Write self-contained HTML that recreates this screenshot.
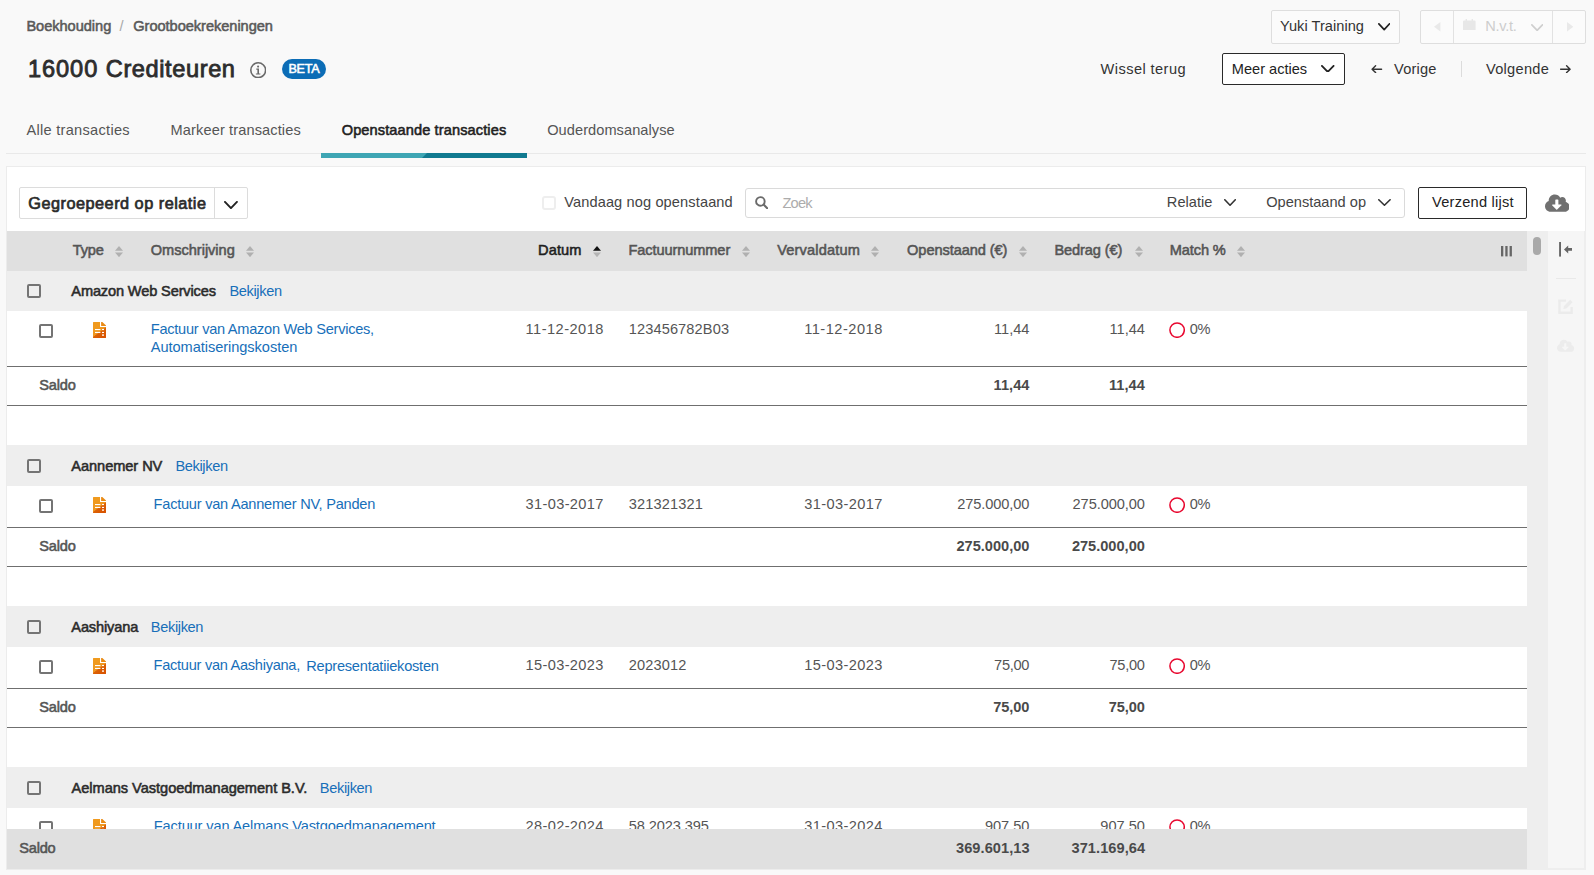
<!DOCTYPE html>
<html lang="nl">
<head>
<meta charset="utf-8">
<title>16000 Crediteuren</title>
<style>
html,body{margin:0;padding:0;}
body{width:1594px;height:875px;overflow:hidden;background:#f9f9f9;position:relative;
  font-family:"Liberation Sans",sans-serif;}
.b{position:absolute;box-sizing:content-box;display:block;}
.t{position:absolute;white-space:pre;line-height:20px;height:20px;}
</style>
</head>
<body>
<div class="b" style="left:6px;top:153px;width:1580px;height:1px;background:#e9e9e9;"></div>
<div class="b" style="left:6px;top:166px;width:1578px;height:702px;background:#fff;border:1px solid #ececec;"></div>
<svg class="b" style="left:321px;top:153px;" width="206" height="5" viewBox="0 0 206 5"><rect width="206" height="5" fill="#117a90"/><path d="M0 0 H106 L101 5 H0 Z" fill="#3fa6b4"/></svg>
<div class="b" style="left:7px;top:231px;width:1520px;height:40px;background:#e0e0e0;"></div>
<div class="b" style="left:1527px;top:231px;width:59px;height:639px;background:#eeeeee;"></div>
<div class="b" style="left:1548px;top:231px;width:36px;height:637px;background:#f6f6f6;"></div>
<div class="b" style="left:1533px;top:237px;width:8px;height:18px;background:#a9a9a9;border-radius:4px;"></div>
<div class="b" style="left:1556px;top:278px;width:20px;height:1px;background:#e9e9e9;"></div>
<div class="b" style="left:7px;top:271px;width:1520px;height:40px;background:#eeeeee;"></div>
<div class="b" style="left:7px;top:366px;width:1520px;height:1px;background:#6f6f6f;"></div>
<div class="b" style="left:7px;top:405px;width:1520px;height:1px;background:#6f6f6f;"></div>
<div class="b" style="left:7px;top:445px;width:1520px;height:41px;background:#eeeeee;"></div>
<div class="b" style="left:7px;top:527px;width:1520px;height:1px;background:#6f6f6f;"></div>
<div class="b" style="left:7px;top:566px;width:1520px;height:1px;background:#6f6f6f;"></div>
<div class="b" style="left:7px;top:606px;width:1520px;height:41px;background:#eeeeee;"></div>
<div class="b" style="left:7px;top:688px;width:1520px;height:1px;background:#6f6f6f;"></div>
<div class="b" style="left:7px;top:727px;width:1520px;height:1px;background:#6f6f6f;"></div>
<div class="b" style="left:7px;top:767px;width:1520px;height:41px;background:#eeeeee;"></div>
<span class="t" style="left:26.40px;top:15.74px;font-size:14.6px;color:#5a5a5a;letter-spacing:-0.033px;-webkit-text-stroke:0.55px #5a5a5a;">Boekhouding</span>
<span class="t" style="left:119.60px;top:15.74px;font-size:14.6px;color:#a8a8a8;letter-spacing:0.141px;">/</span>
<span class="t" style="left:133.30px;top:15.74px;font-size:14.6px;color:#5a5a5a;letter-spacing:-0.040px;-webkit-text-stroke:0.55px #5a5a5a;">Grootboekrekeningen</span>
<span class="t" style="left:28.00px;top:58.62px;font-size:23.6px;color:#2d2d2d;letter-spacing:0.917px;-webkit-text-stroke:0.85px #2d2d2d;">16000</span>
<span class="t" style="left:105.80px;top:58.62px;font-size:23.6px;color:#2d2d2d;letter-spacing:0.589px;-webkit-text-stroke:0.85px #2d2d2d;">Crediteuren</span>
<svg class="b" style="left:249.7px;top:61.7px;" width="16.4" height="16.4" viewBox="0 0 16.4 16.4"><circle cx="8.2" cy="8.2" r="7.4" fill="none" stroke="#6a6a6a" stroke-width="1.6"/><circle cx="8.1" cy="4.6" r="1.05" fill="#6a6a6a"/><path d="M6.3 6.6 H9 V11.4 H10.4 V12.5 H5.9 V11.4 H7.4 V7.7 H6.3 Z" fill="#6a6a6a"/></svg>
<div class="b" style="left:282px;top:59px;width:44px;height:20px;background:#0c6db6;border-radius:10px;"></div>
<span class="t" style="left:288.40px;top:58.53px;font-size:12.6px;color:#fff;letter-spacing:-0.260px;-webkit-text-stroke:0.55px #fff;">BETA</span>
<div class="b" style="left:1271px;top:10px;width:127px;height:32px;background:#fbfbfb;border:1px solid #dedede;border-radius:2px;"></div>
<span class="t" style="left:1280.00px;top:16.34px;font-size:14.6px;color:#333;letter-spacing:0.033px;">Yuki Training</span>
<svg class="b" style="left:1378.0px;top:23.4px;" width="12.4" height="7.5" viewBox="0 0 12.4 7.5"><path d="M0.85 0.85 L6.20 6.65 L11.55 0.85" fill="none" stroke="#222" stroke-width="1.7" stroke-linecap="round" stroke-linejoin="round"/></svg>
<div class="b" style="left:1420px;top:10px;width:164px;height:32px;background:#fbfbfb;border:1px solid #dedede;border-radius:2px;"></div>
<div class="b" style="left:1453px;top:11px;width:1px;height:32px;background:#e2e2e2;"></div>
<div class="b" style="left:1552px;top:11px;width:1px;height:32px;background:#e2e2e2;"></div>
<svg class="b" style="left:1434.3px;top:22.4px;" width="6.4" height="9.6" viewBox="0 0 6.4 9.6"><path d="M6.4 0 V9.6 L0 4.8 Z" fill="#e9e9e9"/></svg>
<svg class="b" style="left:1567.0px;top:22.4px;" width="6.4" height="9.6" viewBox="0 0 6.4 9.6"><path d="M0 0 V9.6 L6.4 4.8 Z" fill="#e9e9e9"/></svg>
<svg class="b" style="left:1463.3px;top:18.9px;" width="12.6" height="11.6" viewBox="0 0 12.6 11.6"><path d="M2.6 0 H4 V1.4 H8.6 V0 H10 V1.4 H11.4 Q12.6 1.4 12.6 2.6 V10.4 Q12.6 11.6 11.4 11.6 H1.2 Q0 11.6 0 10.4 V2.6 Q0 1.4 1.2 1.4 H2.6 Z" fill="#e7e7e7"/></svg>
<span class="t" style="left:1485.30px;top:16.34px;font-size:14.6px;color:#cdcdcd;letter-spacing:-0.316px;">N.v.t.</span>
<svg class="b" style="left:1530.7px;top:23.6px;" width="12.3" height="7.2" viewBox="0 0 12.3 7.2"><path d="M0.85 0.85 L6.15 6.35 L11.45 0.85" fill="none" stroke="#cfcfcf" stroke-width="1.7" stroke-linecap="round" stroke-linejoin="round"/></svg>
<span class="t" style="left:1100.60px;top:58.74px;font-size:14.6px;color:#333;letter-spacing:0.426px;">Wissel terug</span>
<div class="b" style="left:1222px;top:53px;width:121px;height:30px;background:#fff;border:1px solid #2a2a2a;border-radius:2px;"></div>
<span class="t" style="left:1231.80px;top:58.74px;font-size:14.6px;color:#222;letter-spacing:-0.015px;">Meer acties</span>
<svg class="b" style="left:1321.3px;top:64.6px;" width="13.5" height="7.8" viewBox="0 0 13.5 7.8"><path d="M0.90 0.90 L6.75 6.90 L12.60 0.90" fill="none" stroke="#222" stroke-width="1.8" stroke-linecap="round" stroke-linejoin="round"/></svg>
<svg class="b" style="left:1371.4px;top:64.5px;" width="11.2" height="8.4" viewBox="0 0 11.2 8.4"><path d="M10.6 4.2 H1.2 M4.6 0.8 L1.1 4.2 L4.6 7.6" fill="none" stroke="#333" stroke-width="1.4" stroke-linecap="round" stroke-linejoin="round"/></svg>
<span class="t" style="left:1394.00px;top:58.74px;font-size:14.6px;color:#333;letter-spacing:0.202px;">Vorige</span>
<div class="b" style="left:1461px;top:61px;width:1px;height:16px;background:#dcdcdc;"></div>
<span class="t" style="left:1486.00px;top:58.74px;font-size:14.6px;color:#333;letter-spacing:0.272px;">Volgende</span>
<svg class="b" style="left:1559.8px;top:64.5px;" width="11.2" height="8.4" viewBox="0 0 11.2 8.4"><path d="M0.6 4.2 H10 M6.6 0.8 L10.1 4.2 L6.6 7.6" fill="none" stroke="#333" stroke-width="1.4" stroke-linecap="round" stroke-linejoin="round"/></svg>
<span class="t" style="left:26.40px;top:119.74px;font-size:14.6px;color:#555;letter-spacing:0.286px;">Alle transacties</span>
<span class="t" style="left:170.60px;top:119.74px;font-size:14.6px;color:#555;letter-spacing:0.111px;">Markeer transacties</span>
<span class="t" style="left:341.70px;top:119.74px;font-size:14.6px;color:#222;letter-spacing:0.104px;-webkit-text-stroke:0.55px #222;">Openstaande transacties</span>
<span class="t" style="left:547.20px;top:119.74px;font-size:14.6px;color:#555;letter-spacing:0.060px;">Ouderdomsanalyse</span>
<div class="b" style="left:19px;top:187px;width:227px;height:30px;background:#fff;border:1px solid #dcdcdc;border-radius:2px;"></div>
<div class="b" style="left:214px;top:188px;width:1px;height:30px;background:#dcdcdc;"></div>
<span class="t" style="left:28.30px;top:192.65px;font-size:16.3px;color:#2b2b2b;letter-spacing:0.488px;-webkit-text-stroke:0.7px #2b2b2b;">Gegroepeerd op relatie</span>
<svg class="b" style="left:224.4px;top:201.2px;" width="13.9" height="8.1" viewBox="0 0 13.9 8.1"><path d="M0.95 0.95 L6.95 7.15 L12.95 0.95" fill="none" stroke="#222" stroke-width="1.9" stroke-linecap="round" stroke-linejoin="round"/></svg>
<div class="b" style="left:542px;top:196px;width:10px;height:10px;background:#fff;border:2px solid #eeeeee;border-radius:3px;"></div>
<span class="t" style="left:564.20px;top:191.74px;font-size:14.6px;color:#444;letter-spacing:0.116px;">Vandaag nog openstaand</span>
<div class="b" style="left:745px;top:188px;width:658px;height:28px;background:#fff;border:1px solid #dadada;border-radius:3px;"></div>
<svg class="b" style="left:755.2px;top:196.2px;" width="13.2" height="13.2" viewBox="0 0 13.2 13.2"><circle cx="5.4" cy="5.4" r="4.3" fill="none" stroke="#6a6a6a" stroke-width="1.9"/><path d="M8.6 8.6 L12.2 12.2" stroke="#6a6a6a" stroke-width="2.1" stroke-linecap="round"/></svg>
<span class="t" style="left:782.50px;top:192.94px;font-size:14.6px;color:#acacac;letter-spacing:-0.795px;">Zoek</span>
<span class="t" style="left:1166.80px;top:192.14px;font-size:14.6px;color:#444;letter-spacing:0.042px;">Relatie</span>
<svg class="b" style="left:1224.3px;top:198.9px;" width="12.1" height="7.1" viewBox="0 0 12.1 7.1"><path d="M0.80 0.80 L6.05 6.30 L11.30 0.80" fill="none" stroke="#333" stroke-width="1.6" stroke-linecap="round" stroke-linejoin="round"/></svg>
<span class="t" style="left:1266.20px;top:192.14px;font-size:14.6px;color:#444;">Openstaand op</span>
<svg class="b" style="left:1378.1px;top:198.9px;" width="12.9" height="7.1" viewBox="0 0 12.9 7.1"><path d="M0.80 0.80 L6.45 6.30 L12.10 0.80" fill="none" stroke="#333" stroke-width="1.6" stroke-linecap="round" stroke-linejoin="round"/></svg>
<div class="b" style="left:1418px;top:187px;width:107px;height:30px;background:#fff;border:1px solid #2a2a2a;border-radius:2px;"></div>
<span class="t" style="left:1432.10px;top:191.74px;font-size:14.6px;color:#222;letter-spacing:0.231px;">Verzend lijst</span>
<svg class="b" style="left:1544.5px;top:192.2px;" width="24.6" height="22.4" viewBox="0 0 640 512"><path d="M537.6 226.6c4.1-10.7 6.400-22.400 6.400-34.600 0-53-43-96-96-96-19.700 0-38.100 6-53.300 16.200C367 64.200 315.300 32 256 32c-88.400 0-160 71.600-160 160 0 2.700.1 5.400.2 8.100C40.200 219.800 0 273.200 0 336c0 79.500 64.500 144 144 144h368c70.700 0 128-57.300 128-128 0-61.900-44-113.600-102.400-125.400z" fill="#707070"/><path d="M421 315.300L316.700 419.600c-6.200 6.200-16.400 6.200-22.600 0L189.700 315.300c-10.100-10.100-2.900-27.300 11.300-27.300h67V176c0-8.800 7.200-16 16-16h48c8.800 0 16 7.200 16 16v112h67c14.200 0 21.400 17.200 11.300 27.300z" fill="#fff"/></svg>
<span class="t" style="left:72.80px;top:240.14px;font-size:14.6px;color:#555;letter-spacing:-0.184px;-webkit-text-stroke:0.55px #555;">Type</span>
<svg class="b" style="left:115.4px;top:245.9px;" width="8" height="11.2" viewBox="0 0 8 11.2"><path d="M4 0 L8 4.8 L0 4.8 Z" fill="#b0b0b0"/><path d="M0 6.4 L8 6.4 L4 11.2 Z" fill="#b0b0b0"/></svg>
<span class="t" style="left:150.80px;top:240.14px;font-size:14.6px;color:#555;letter-spacing:-0.034px;-webkit-text-stroke:0.55px #555;">Omschrijving</span>
<svg class="b" style="left:246.3px;top:245.9px;" width="8" height="11.2" viewBox="0 0 8 11.2"><path d="M4 0 L8 4.8 L0 4.8 Z" fill="#b0b0b0"/><path d="M0 6.4 L8 6.4 L4 11.2 Z" fill="#b0b0b0"/></svg>
<span class="t" style="left:538.00px;top:240.14px;font-size:14.6px;color:#1e1e1e;letter-spacing:0.126px;-webkit-text-stroke:0.55px #1e1e1e;">Datum</span>
<svg class="b" style="left:593.0px;top:245.9px;" width="8" height="11.2" viewBox="0 0 8 11.2"><path d="M4 0 L8 4.8 L0 4.8 Z" fill="#111"/><path d="M0 6.4 L8 6.4 L4 11.2 Z" fill="#b4b4b4"/></svg>
<span class="t" style="left:628.40px;top:240.14px;font-size:14.6px;color:#555;letter-spacing:-0.096px;-webkit-text-stroke:0.55px #555;">Factuurnummer</span>
<svg class="b" style="left:741.8px;top:245.9px;" width="8" height="11.2" viewBox="0 0 8 11.2"><path d="M4 0 L8 4.8 L0 4.8 Z" fill="#b0b0b0"/><path d="M0 6.4 L8 6.4 L4 11.2 Z" fill="#b0b0b0"/></svg>
<span class="t" style="left:777.20px;top:240.14px;font-size:14.6px;color:#555;letter-spacing:0.164px;-webkit-text-stroke:0.55px #555;">Vervaldatum</span>
<svg class="b" style="left:871.1px;top:245.9px;" width="8" height="11.2" viewBox="0 0 8 11.2"><path d="M4 0 L8 4.8 L0 4.8 Z" fill="#b0b0b0"/><path d="M0 6.4 L8 6.4 L4 11.2 Z" fill="#b0b0b0"/></svg>
<span class="t" style="left:907.10px;top:240.14px;font-size:14.6px;color:#555;letter-spacing:-0.081px;-webkit-text-stroke:0.55px #555;">Openstaand (€)</span>
<svg class="b" style="left:1019.3px;top:245.9px;" width="8" height="11.2" viewBox="0 0 8 11.2"><path d="M4 0 L8 4.8 L0 4.8 Z" fill="#b0b0b0"/><path d="M0 6.4 L8 6.4 L4 11.2 Z" fill="#b0b0b0"/></svg>
<span class="t" style="left:1054.40px;top:240.14px;font-size:14.6px;color:#555;letter-spacing:-0.109px;-webkit-text-stroke:0.55px #555;">Bedrag (€)</span>
<svg class="b" style="left:1134.5px;top:245.9px;" width="8" height="11.2" viewBox="0 0 8 11.2"><path d="M4 0 L8 4.8 L0 4.8 Z" fill="#b0b0b0"/><path d="M0 6.4 L8 6.4 L4 11.2 Z" fill="#b0b0b0"/></svg>
<span class="t" style="left:1169.80px;top:240.14px;font-size:14.6px;color:#555;letter-spacing:-0.132px;-webkit-text-stroke:0.55px #555;">Match %</span>
<svg class="b" style="left:1237.4px;top:245.9px;" width="8" height="11.2" viewBox="0 0 8 11.2"><path d="M4 0 L8 4.8 L0 4.8 Z" fill="#b0b0b0"/><path d="M0 6.4 L8 6.4 L4 11.2 Z" fill="#b0b0b0"/></svg>
<svg class="b" style="left:1501px;top:246.2px;" width="11" height="10.4" viewBox="0 0 11 10.4"><rect x="0" width="2.3" height="10.4" fill="#666"/><rect x="4.3" width="2.3" height="10.4" fill="#666"/><rect x="8.6" width="2.3" height="10.4" fill="#666"/></svg>
<svg class="b" style="left:1559px;top:242.4px;" width="13.4" height="14.6" viewBox="0 0 13.4 14.6"><rect x="0.1" y="0" width="1.9" height="14.6" fill="#666"/><path d="M5 7.4 L9.2 3.4 V6 H13.2 V8.8 H9.2 V11.4 Z" fill="#666"/></svg>
<svg class="b" style="left:1558.4px;top:298.6px;" width="15.2" height="15.2" viewBox="0 0 15.2 15.2"><path d="M8 1.6 H1.4 V13.8 H13.6 V8" fill="none" stroke="#ebebeb" stroke-width="2.4"/><path d="M5.4 10 L6 7 L12.2 0.8 L14.6 3.2 L8.4 9.4 Z" fill="#ebebeb"/></svg>
<svg class="b" style="left:1557.4px;top:338.4px;" width="17.2" height="15.6" viewBox="0 0 640 512"><path d="M537.6 226.6c4.1-10.7 6.400-22.400 6.400-34.600 0-53-43-96-96-96-19.700 0-38.100 6-53.300 16.200C367 64.200 315.300 32 256 32c-88.400 0-160 71.600-160 160 0 2.700.1 5.400.2 8.100C40.200 219.800 0 273.200 0 336c0 79.500 64.500 144 144 144h368c70.700 0 128-57.300 128-128 0-61.900-44-113.600-102.400-125.400z" fill="#ececec"/><path d="M421 315.300L316.700 419.600c-6.200 6.200-16.400 6.200-22.600 0L189.700 315.300c-10.100-10.100-2.900-27.300 11.300-27.300h67V176c0-8.800 7.200-16 16-16h48c8.800 0 16 7.200 16 16v112h67c14.200 0 21.400 17.200 11.300 27.300z" fill="#f6f6f6"/></svg>
<div class="b" style="left:27px;top:284px;width:10px;height:10px;border:2px solid #747474;border-radius:2px;"></div>
<span class="t" style="left:71.30px;top:281.24px;font-size:14.6px;color:#2b2b2b;letter-spacing:-0.145px;-webkit-text-stroke:0.55px #2b2b2b;">Amazon Web Services</span>
<span class="t" style="left:229.40px;top:281.24px;font-size:14.6px;color:#176fb9;letter-spacing:-0.355px;">Bekijken</span>
<div class="b" style="left:39px;top:324px;width:10px;height:10px;border:2px solid #747474;border-radius:2px;"></div>
<svg class="b" style="left:93px;top:322px;" width="13" height="16" viewBox="0 0 13 16"><defs><linearGradient id="dg1" gradientUnits="userSpaceOnUse" x1="2.9" y1="5.34" x2="10.1" y2="14.96"><stop offset="0" stop-color="#f09a1e"/><stop offset="0.47" stop-color="#ee9620"/><stop offset="0.53" stop-color="#dc6206"/><stop offset="1" stop-color="#d85400"/></linearGradient></defs><path d="M0.4 0 H7 V4.6 Q7 5.1 7.5 5.1 H13 V15.4 Q13 16 12.4 16 H0.6 Q0 16 0 15.4 V0.4 Q0 0 0.4 0 Z" fill="url(#dg1)"/><path d="M8.1 0 H9.3 L13 3.6 V4.1 H8.1 Z" fill="#e98a14"/><rect x="2" y="7" width="5.4" height="1.1" fill="#fff"/><rect x="9" y="7" width="2" height="1.1" fill="#fff"/><rect x="2" y="9.9" width="5.4" height="1.1" fill="#fff"/><rect x="9" y="9.9" width="2" height="1.1" fill="#fff"/><rect x="9" y="12.3" width="2" height="1.6" fill="#fbe3cf"/></svg>
<span class="t" style="left:150.80px;top:319.14px;font-size:14.6px;color:#176fb9;letter-spacing:-0.272px;">Factuur van Amazon Web Services,</span>
<span class="t" style="left:150.80px;top:337.24px;font-size:14.6px;color:#176fb9;letter-spacing:-0.055px;">Automatiseringskosten</span>
<span class="t" style="left:525.60px;top:319.24px;font-size:14.6px;color:#555;letter-spacing:0.467px;">11-12-2018</span>
<span class="t" style="left:628.70px;top:319.24px;font-size:14.6px;color:#555;letter-spacing:0.122px;">123456782B03</span>
<span class="t" style="left:804.20px;top:319.24px;font-size:14.6px;color:#555;letter-spacing:0.511px;">11-12-2018</span>
<span class="t" style="left:994.10px;top:319.24px;font-size:14.6px;color:#555;letter-spacing:-0.012px;">11,44</span>
<span class="t" style="left:1109.50px;top:319.24px;font-size:14.6px;color:#555;letter-spacing:-0.012px;">11,44</span>
<svg class="b" style="left:1169.2px;top:321.6px;" width="16.2" height="16.2" viewBox="0 0 16.2 16.2"><circle cx="8.1" cy="8.1" r="7.2" fill="none" stroke="#e8082f" stroke-width="1.5"/></svg>
<span class="t" style="left:1189.80px;top:319.44px;font-size:14.6px;color:#555;letter-spacing:-0.497px;">0%</span>
<span class="t" style="left:39.30px;top:374.74px;font-size:14.6px;color:#555;letter-spacing:-0.187px;-webkit-text-stroke:0.55px #555;">Saldo</span>
<span class="t" style="left:993.50px;top:374.74px;font-size:14.6px;color:#4a4a4a;letter-spacing:0.068px;font-weight:700;">11,44</span>
<span class="t" style="left:1108.90px;top:374.74px;font-size:14.6px;color:#4a4a4a;letter-spacing:0.068px;font-weight:700;">11,44</span>
<div class="b" style="left:27px;top:459px;width:10px;height:10px;border:2px solid #747474;border-radius:2px;"></div>
<span class="t" style="left:71.30px;top:456.24px;font-size:14.6px;color:#2b2b2b;letter-spacing:-0.060px;-webkit-text-stroke:0.55px #2b2b2b;">Aannemer NV</span>
<span class="t" style="left:175.40px;top:456.24px;font-size:14.6px;color:#176fb9;letter-spacing:-0.355px;">Bekijken</span>
<div class="b" style="left:39px;top:499px;width:10px;height:10px;border:2px solid #747474;border-radius:2px;"></div>
<svg class="b" style="left:93px;top:497px;" width="13" height="16" viewBox="0 0 13 16"><defs><linearGradient id="dg2" gradientUnits="userSpaceOnUse" x1="2.9" y1="5.34" x2="10.1" y2="14.96"><stop offset="0" stop-color="#f09a1e"/><stop offset="0.47" stop-color="#ee9620"/><stop offset="0.53" stop-color="#dc6206"/><stop offset="1" stop-color="#d85400"/></linearGradient></defs><path d="M0.4 0 H7 V4.6 Q7 5.1 7.5 5.1 H13 V15.4 Q13 16 12.4 16 H0.6 Q0 16 0 15.4 V0.4 Q0 0 0.4 0 Z" fill="url(#dg2)"/><path d="M8.1 0 H9.3 L13 3.6 V4.1 H8.1 Z" fill="#e98a14"/><rect x="2" y="7" width="5.4" height="1.1" fill="#fff"/><rect x="9" y="7" width="2" height="1.1" fill="#fff"/><rect x="2" y="9.9" width="5.4" height="1.1" fill="#fff"/><rect x="9" y="9.9" width="2" height="1.1" fill="#fff"/><rect x="9" y="12.3" width="2" height="1.6" fill="#fbe3cf"/></svg>
<span class="t" style="left:153.60px;top:494.44px;font-size:14.6px;color:#176fb9;letter-spacing:-0.245px;">Factuur van Aannemer NV, Panden</span>
<span class="t" style="left:525.60px;top:494.24px;font-size:14.6px;color:#555;letter-spacing:0.347px;">31-03-2017</span>
<span class="t" style="left:628.70px;top:494.24px;font-size:14.6px;color:#555;letter-spacing:0.153px;">321321321</span>
<span class="t" style="left:804.20px;top:494.24px;font-size:14.6px;color:#555;letter-spacing:0.391px;">31-03-2017</span>
<span class="t" style="left:957.20px;top:494.24px;font-size:14.6px;color:#555;letter-spacing:-0.086px;">275.000,00</span>
<span class="t" style="left:1072.60px;top:494.24px;font-size:14.6px;color:#555;letter-spacing:-0.086px;">275.000,00</span>
<svg class="b" style="left:1169.2px;top:496.6px;" width="16.2" height="16.2" viewBox="0 0 16.2 16.2"><circle cx="8.1" cy="8.1" r="7.2" fill="none" stroke="#e8082f" stroke-width="1.5"/></svg>
<span class="t" style="left:1189.80px;top:494.44px;font-size:14.6px;color:#555;letter-spacing:-0.497px;">0%</span>
<span class="t" style="left:39.30px;top:535.74px;font-size:14.6px;color:#555;letter-spacing:-0.187px;-webkit-text-stroke:0.55px #555;">Saldo</span>
<span class="t" style="left:956.50px;top:535.74px;font-size:14.6px;color:#4a4a4a;letter-spacing:-0.008px;font-weight:700;">275.000,00</span>
<span class="t" style="left:1071.90px;top:535.74px;font-size:14.6px;color:#4a4a4a;letter-spacing:-0.008px;font-weight:700;">275.000,00</span>
<div class="b" style="left:27px;top:620px;width:10px;height:10px;border:2px solid #747474;border-radius:2px;"></div>
<span class="t" style="left:71.30px;top:617.24px;font-size:14.6px;color:#2b2b2b;letter-spacing:-0.150px;-webkit-text-stroke:0.55px #2b2b2b;">Aashiyana</span>
<span class="t" style="left:150.80px;top:617.24px;font-size:14.6px;color:#176fb9;letter-spacing:-0.355px;">Bekijken</span>
<div class="b" style="left:39px;top:660px;width:10px;height:10px;border:2px solid #747474;border-radius:2px;"></div>
<svg class="b" style="left:93px;top:658px;" width="13" height="16" viewBox="0 0 13 16"><defs><linearGradient id="dg3" gradientUnits="userSpaceOnUse" x1="2.9" y1="5.34" x2="10.1" y2="14.96"><stop offset="0" stop-color="#f09a1e"/><stop offset="0.47" stop-color="#ee9620"/><stop offset="0.53" stop-color="#dc6206"/><stop offset="1" stop-color="#d85400"/></linearGradient></defs><path d="M0.4 0 H7 V4.6 Q7 5.1 7.5 5.1 H13 V15.4 Q13 16 12.4 16 H0.6 Q0 16 0 15.4 V0.4 Q0 0 0.4 0 Z" fill="url(#dg3)"/><path d="M8.1 0 H9.3 L13 3.6 V4.1 H8.1 Z" fill="#e98a14"/><rect x="2" y="7" width="5.4" height="1.1" fill="#fff"/><rect x="9" y="7" width="2" height="1.1" fill="#fff"/><rect x="2" y="9.9" width="5.4" height="1.1" fill="#fff"/><rect x="9" y="9.9" width="2" height="1.1" fill="#fff"/><rect x="9" y="12.3" width="2" height="1.6" fill="#fbe3cf"/></svg>
<span class="t" style="left:153.60px;top:655.24px;font-size:14.6px;color:#176fb9;letter-spacing:-0.280px;">Factuur van Aashiyana,</span>
<span class="t" style="left:306.20px;top:656.34px;font-size:14.6px;color:#176fb9;letter-spacing:-0.230px;">Representatiiekosten</span>
<span class="t" style="left:525.60px;top:655.24px;font-size:14.6px;color:#555;letter-spacing:0.347px;">15-03-2023</span>
<span class="t" style="left:628.70px;top:655.24px;font-size:14.6px;color:#555;letter-spacing:0.144px;">2023012</span>
<span class="t" style="left:804.20px;top:655.24px;font-size:14.6px;color:#555;letter-spacing:0.391px;">15-03-2023</span>
<span class="t" style="left:994.10px;top:655.24px;font-size:14.6px;color:#555;letter-spacing:-0.282px;">75,00</span>
<span class="t" style="left:1109.50px;top:655.24px;font-size:14.6px;color:#555;letter-spacing:-0.282px;">75,00</span>
<svg class="b" style="left:1169.2px;top:657.5999999999999px;" width="16.2" height="16.2" viewBox="0 0 16.2 16.2"><circle cx="8.1" cy="8.1" r="7.2" fill="none" stroke="#e8082f" stroke-width="1.5"/></svg>
<span class="t" style="left:1189.80px;top:655.44px;font-size:14.6px;color:#555;letter-spacing:-0.497px;">0%</span>
<span class="t" style="left:39.30px;top:696.74px;font-size:14.6px;color:#555;letter-spacing:-0.187px;-webkit-text-stroke:0.55px #555;">Saldo</span>
<span class="t" style="left:993.30px;top:696.74px;font-size:14.6px;color:#4a4a4a;letter-spacing:-0.082px;font-weight:700;">75,00</span>
<span class="t" style="left:1108.70px;top:696.74px;font-size:14.6px;color:#4a4a4a;letter-spacing:-0.082px;font-weight:700;">75,00</span>
<div class="b" style="left:27px;top:781px;width:10px;height:10px;border:2px solid #747474;border-radius:2px;"></div>
<span class="t" style="left:71.60px;top:778.14px;font-size:14.6px;color:#2b2b2b;letter-spacing:-0.040px;-webkit-text-stroke:0.55px #2b2b2b;">Aelmans Vastgoedmanagement B.V.</span>
<span class="t" style="left:319.80px;top:778.14px;font-size:14.6px;color:#176fb9;letter-spacing:-0.355px;">Bekijken</span>
<div class="b" style="left:39px;top:821px;width:10px;height:10px;border:2px solid #747474;border-radius:2px;"></div>
<svg class="b" style="left:93px;top:819px;" width="13" height="16" viewBox="0 0 13 16"><defs><linearGradient id="dg4" gradientUnits="userSpaceOnUse" x1="2.9" y1="5.34" x2="10.1" y2="14.96"><stop offset="0" stop-color="#f09a1e"/><stop offset="0.47" stop-color="#ee9620"/><stop offset="0.53" stop-color="#dc6206"/><stop offset="1" stop-color="#d85400"/></linearGradient></defs><path d="M0.4 0 H7 V4.6 Q7 5.1 7.5 5.1 H13 V15.4 Q13 16 12.4 16 H0.6 Q0 16 0 15.4 V0.4 Q0 0 0.4 0 Z" fill="url(#dg4)"/><path d="M8.1 0 H9.3 L13 3.6 V4.1 H8.1 Z" fill="#e98a14"/><rect x="2" y="7" width="5.4" height="1.1" fill="#fff"/><rect x="9" y="7" width="2" height="1.1" fill="#fff"/><rect x="2" y="9.9" width="5.4" height="1.1" fill="#fff"/><rect x="9" y="9.9" width="2" height="1.1" fill="#fff"/><rect x="9" y="12.3" width="2" height="1.6" fill="#fbe3cf"/></svg>
<span class="t" style="left:153.80px;top:816.14px;font-size:14.6px;color:#176fb9;letter-spacing:-0.136px;">Factuur van Aelmans Vastgoedmanagement</span>
<span class="t" style="left:525.60px;top:816.14px;font-size:14.6px;color:#555;letter-spacing:0.347px;">28-02-2024</span>
<span class="t" style="left:628.70px;top:816.14px;font-size:14.6px;color:#555;letter-spacing:-0.089px;">58.2023.395</span>
<span class="t" style="left:804.20px;top:816.14px;font-size:14.6px;color:#555;letter-spacing:0.391px;">31-03-2024</span>
<span class="t" style="left:984.90px;top:816.14px;font-size:14.6px;color:#555;letter-spacing:-0.012px;">907,50</span>
<span class="t" style="left:1100.30px;top:816.14px;font-size:14.6px;color:#555;letter-spacing:-0.012px;">907,50</span>
<svg class="b" style="left:1169.2px;top:818.5px;" width="16.2" height="16.2" viewBox="0 0 16.2 16.2"><circle cx="8.1" cy="8.1" r="7.2" fill="none" stroke="#e8082f" stroke-width="1.5"/></svg>
<span class="t" style="left:1189.80px;top:816.34px;font-size:14.6px;color:#555;letter-spacing:-0.497px;">0%</span>
<div class="b" style="left:7px;top:829px;width:1520px;height:40px;background:#e0e0e0;z-index:5;"></div>
<span class="t" style="z-index:6;left:19.30px;top:837.94px;font-size:14.6px;color:#555;letter-spacing:-0.237px;-webkit-text-stroke:0.55px #555;">Saldo</span>
<span class="t" style="z-index:6;left:956.00px;top:838.04px;font-size:14.6px;color:#4a4a4a;letter-spacing:0.059px;font-weight:700;">369.601,13</span>
<span class="t" style="z-index:6;left:1071.50px;top:838.04px;font-size:14.6px;color:#4a4a4a;letter-spacing:0.059px;font-weight:700;">371.169,64</span>
</body>
</html>
